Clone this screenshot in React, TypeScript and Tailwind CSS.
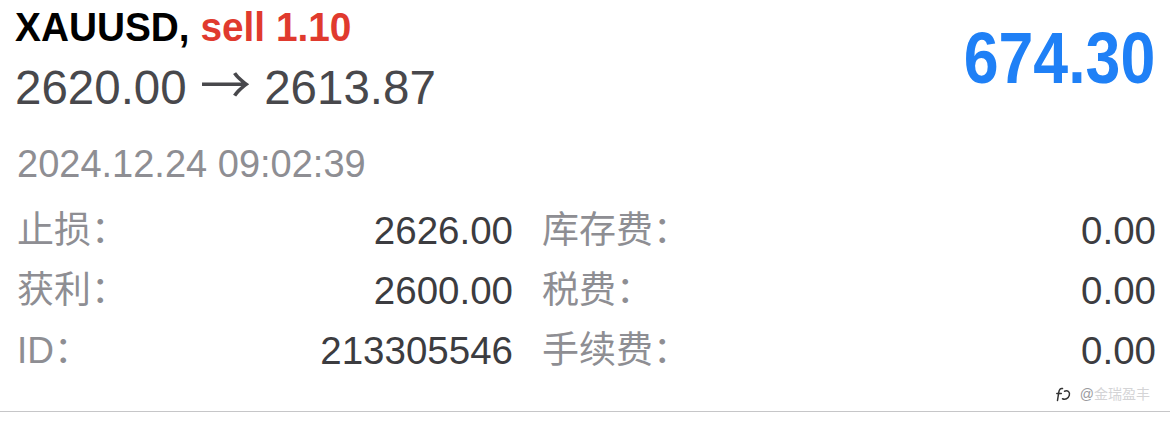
import React from "react";

const rows: [string, string, string, string][] = [
  ["止损：", "2626.00", "库存费：", "0.00"],
  ["获利：", "2600.00", "税费：", "0.00"],
  ["ID：", "213305546", "手续费：", "0.00"],
];

export default function App() {
  return (
    <div className="w-[1170px] h-[426px] bg-white overflow-hidden font-['Liberation_Sans','Noto_Sans_CJK_SC',sans-serif]">
      <div className="flex justify-between pl-[15px] pr-[15px]">
        <div className="flex flex-col">
          <div className="pt-[4px] h-[50px] leading-[46px] text-[40px] font-bold text-black whitespace-nowrap">
            <span className="inline-block origin-left scale-x-[0.97]">
              XAUUSD, <span className="text-[#e03a2e]">sell 1.10</span>
            </span>
          </div>
          <div className="mt-[11px] h-[54px] leading-[54px] text-[47.5px] text-[#48484c] whitespace-nowrap">
            2620.00{" "}
            <span className="leading-[0px] font-['Noto_Sans_CJK_SC',sans-serif] text-[51px]">→</span>{" "}
            2613.87
          </div>
        </div>
        <div className="pt-[18px] leading-[80px] text-[72px] font-bold text-[#1f80f6] whitespace-nowrap">
          <span className="inline-block origin-right scale-x-[0.87]">674.30</span>
        </div>
      </div>
      <div className="mt-[26px] pl-[17px] h-[46px] leading-[46px] text-[38px] text-[#8e8e93]">
        2024.12.24 09:02:39
      </div>
      <div className="mt-[14px] pl-[17px] pr-[14px] grid grid-cols-[496px_1fr] gap-x-[29px]">
        {rows.map((r, i) => (
          <React.Fragment key={i}>
            <div className="flex justify-between h-[60px] leading-[60px] text-[38.5px]">
              <span className="text-[#8e8e93] text-[37px]">{r[0]}</span>
              <span className="text-[#3c3c40]">{r[1]}</span>
            </div>
            <div className="flex justify-between h-[60px] leading-[60px] text-[38.5px]">
              <span className="text-[#8e8e93] text-[37px]">{r[2]}</span>
              <span className="text-[#3c3c40]">{r[3]}</span>
            </div>
          </React.Fragment>
        ))}
      </div>
      <div className="h-[30px] pr-[20px] pb-[4px] flex justify-end items-center gap-[8px] text-[14px] text-[#d4d4d6]">
        <svg width="18" height="17" viewBox="0 0 18 17" fill="none" stroke="#333" strokeWidth="1.5" strokeLinecap="round">
          <path d="M8.5 2.5C6.3 2 5.2 3.6 4.8 6.2L3.5 14.5" />
          <path d="M2.8 7.5h4.5" />
          <path d="M10.5 5.2c3.2-1.3 5.8 0.8 4.8 4.2s-4.2 4.5-6.8 3.3" />
        </svg>
        <span>
          <span className="text-[#9a9a9e]">@</span>金瑞盈丰
        </span>
      </div>
      <div className="h-[1px] bg-[#c6c6c8]" />
    </div>
  );
}
